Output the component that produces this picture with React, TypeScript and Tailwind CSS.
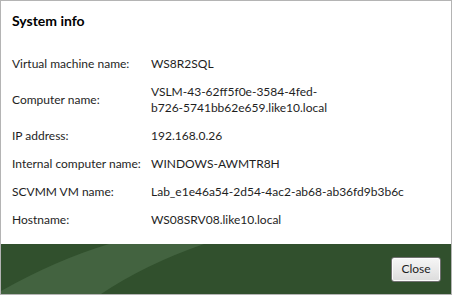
export default function App() {
  const rows: { label: string; value: React.ReactNode }[] = [
    { label: "Virtual machine name:", value: "WS8R2SQL" },
    {
      label: "Computer name:",
      value: (
        <>
          VSLM-43-62ff5f0e-3584-4fed-
          <br />
          b726-5741bb62e659.like10.local
        </>
      ),
    },
    { label: "IP address:", value: "192.168.0.26" },
    { label: "Internal computer name:", value: "WINDOWS-AWMTR8H" },
    { label: "SCVMM VM name:", value: "Lab_e1e46a54-2d54-4ac2-ab68-ab36fd9b3b6c" },
    { label: "Hostname:", value: "WS08SRV08.like10.local" },
  ];

  return (
    <div
      className="w-[452px] h-[295px] border border-[#b4b4b4] bg-white flex flex-col text-[#1e1e1e]"
      style={{ fontFamily: 'Lato, "Noto Sans", sans-serif' }}
    >
      <div className="h-[243px] px-[11px] pt-[10px]">
        <h1 className="text-[14px] leading-[20px] font-bold text-black">System info</h1>

        {/* details */}
        <div className="mt-[25px] grid grid-cols-[139px_1fr] gap-y-3 items-center text-[12px] leading-[16px]">
          {rows.map((r) => (
            <div key={r.label} className="contents">
              <div className="whitespace-nowrap">{r.label}</div>
              <div className="whitespace-nowrap">{r.value}</div>
            </div>
          ))}
        </div>
      </div>

      {/* footer */}
      <div className="relative h-[50px] bg-[#31502d] flex items-center justify-end pr-[10px]">
        <svg className="absolute inset-0" width="450" height="50" viewBox="0 0 450 50">
          <path d="M0 47 Q55 16 108 0 L203 0 Q145 20 100 50 L0 50 Z" fill="#436340" />
        </svg>
        <button className="relative w-[50px] h-[25px] rounded-[3px] border border-[#707070] bg-gradient-to-b from-[#f6f6f6] via-[#eaeaea] to-[#dcdcdc] text-[12px] text-[#1e1e1e] shadow-[inset_0_0_0_1px_#fcfcfc]">
          Close
        </button>
      </div>
    </div>
  );
}
